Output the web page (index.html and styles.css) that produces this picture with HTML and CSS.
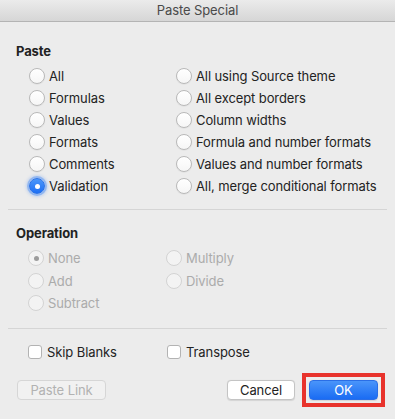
FILE: index.html
```html
<!DOCTYPE html>
<html lang="en">
<head>
    <meta charset="UTF-8">
    <title>Paste Special</title>
    <link rel="stylesheet" href="styles.css">
</head>
<body>
    <div class="dialog">
        <div class="titlebar">Paste Special</div>

        <div class="group">
            <h3 class="heading">Paste</h3>
            <div class="options paste-options">
                <label class="option"><span class="radio"></span>All</label>
                <label class="option"><span class="radio"></span>All using Source theme</label>
                <label class="option"><span class="radio"></span>Formulas</label>
                <label class="option"><span class="radio"></span>All except borders</label>
                <label class="option"><span class="radio"></span>Values</label>
                <label class="option"><span class="radio"></span>Column widths</label>
                <label class="option"><span class="radio"></span>Formats</label>
                <label class="option"><span class="radio"></span>Formula and number formats</label>
                <label class="option"><span class="radio"></span>Comments</label>
                <label class="option"><span class="radio"></span>Values and number formats</label>
                <label class="option"><span class="radio checked"></span>Validation</label>
                <label class="option"><span class="radio"></span>All, merge conditional formats</label>
            </div>
        </div>

        <hr class="separator">

        <div class="group">
            <h3 class="heading">Operation</h3>
            <div class="options operation-options">
                <label class="option disabled"><span class="radio checked"></span>None</label>
                <label class="option disabled"><span class="radio"></span>Multiply</label>
                <label class="option disabled"><span class="radio"></span>Add</label>
                <label class="option disabled"><span class="radio"></span>Divide</label>
                <label class="option disabled"><span class="radio"></span>Subtract</label>
            </div>
        </div>

        <hr class="separator lower">

        <div class="checks">
            <label class="option"><span class="checkbox"></span>Skip Blanks</label>
            <label class="option"><span class="checkbox"></span>Transpose</label>
        </div>

        <div class="buttons">
            <button class="btn" disabled>Paste Link</button>
            <span class="spacer"></span>
            <button class="btn cancel">Cancel</button>
            <span class="highlight"><button class="btn primary">OK</button></span>
        </div>
    </div>
</body>
</html>
```

FILE: styles.css
```css
body {
    margin: 0;
    font-family: Inter, "Liberation Sans", sans-serif;
    font-size: 13px;
    letter-spacing: -0.1px;
    color: #232323;
    background: #ececec;
}

.dialog {
    width: 395px;
    height: 419px;
    background: #ececec;
    overflow: hidden;
}

.titlebar {
    height: 21px;
    line-height: 21px;
    text-align: center;
    color: #4a4a4a;
    background: linear-gradient(#ebebeb, #d6d6d6);
    border-bottom: 1px solid #b4b4b4;
}

.group {
    padding: 0 16px;
}

.heading {
    margin: 0;
    padding-top: 21px;
    font-size: 13px;
    font-weight: 700;
    line-height: 16px;
    color: #222;
}

.separator {
    margin: 12px 8px 0;
    border: none;
    border-top: 1px solid #d5d5d5;
}

.separator.lower {
    margin-top: 13px;
}

.group + .separator + .group .heading {
    padding-top: 15px;
}

/* radio grids */
.options {
    display: grid;
    margin-top: 6px;
}

.paste-options {
    grid-template-columns: 147px 1fr;
    grid-auto-rows: 22px;
    padding-left: 13px;
}

.operation-options {
    grid-template-columns: 138px 1fr;
    grid-auto-rows: 22.5px;
    padding-left: 12px;
}

.option {
    display: flex;
    align-items: center;
    gap: 4px;
    white-space: nowrap;
}

.option.disabled {
    color: #ababab;
}

.radio {
    position: relative;
    width: 14px;
    height: 14px;
    border: 1px solid #b9b9b9;
    border-radius: 50%;
    background: linear-gradient(#ffffff, #f6f6f6);
    box-shadow: 0 0.5px 1px rgba(0, 0, 0, 0.08);
    flex-shrink: 0;
}

.radio.checked {
    background: linear-gradient(#4b97fa, #1e6ff4);
    border-color: #2a72e8;
    box-shadow: 0 0 0 2px rgba(80, 145, 245, 0.45), 0 0 3px 3px rgba(80, 145, 245, 0.25);
}

.radio.checked::after {
    content: "";
    position: absolute;
    left: 4.5px;
    top: 4.5px;
    width: 5px;
    height: 5px;
    border-radius: 50%;
    background: #fff;
}

.disabled .radio {
    border-color: #d3d3d3;
    background: #f3f3f3;
    box-shadow: none;
}

.disabled .radio.checked {
    box-shadow: none;
}

.disabled .radio.checked::after {
    background: #9c9c9c;
}

/* checkboxes */
.checks {
    display: grid;
    grid-template-columns: 139px 1fr;
    height: 16px;
    margin-top: 15px;
    padding-left: 28px;
}

.checks .option {
    gap: 5px;
}

.checkbox {
    width: 12px;
    height: 12px;
    border: 1px solid #b3b3b3;
    border-radius: 3px;
    background: #fff;
    flex-shrink: 0;
}

/* buttons */
.buttons {
    display: flex;
    align-items: center;
    margin-top: 20px;
    padding: 0 17px;
    gap: 14px;
}

.spacer {
    flex: 1;
}

.btn {
    height: 20px;
    padding: 0;
    font-family: inherit;
    font-size: 13px;
    letter-spacing: inherit;
    color: #222;
    background: #fff;
    border: 1px solid #c4c4c4;
    border-radius: 4px;
    box-shadow: 0 0.5px 1px rgba(0, 0, 0, 0.1);
}

.btn:disabled {
    width: 89px;
    color: #b2b2b2;
    background: #f1f1f1;
    border-color: #d6d6d6;
    box-shadow: none;
}

.cancel {
    width: 68px;
}

/* red annotation box round OK */
.highlight {
    display: flex;
    margin: -7px;
    padding: 3px;
    border: 4px solid #e8332c;
}

.primary {
    width: 69px;
    color: #fff;
    background: linear-gradient(#4a95fa, #1a6cf3);
    border-color: #2a6ee6;
}
```
